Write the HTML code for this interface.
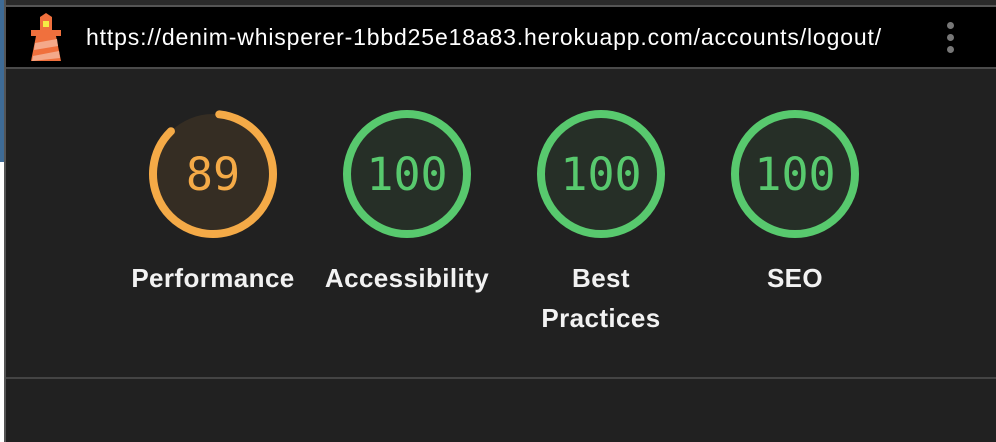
<!DOCTYPE html>
<html><head><style>
*{margin:0;padding:0;box-sizing:border-box}
body{width:996px;height:442px;background:#212121;position:relative;overflow:hidden;font-family:"Liberation Sans",sans-serif}
.top{position:absolute;left:0;top:0;width:996px;height:5px;background:#2a2a2a}
.l1{position:absolute;left:0;top:5px;width:996px;height:2px;background:#555}
.hdr{position:absolute;left:6px;top:7px;width:990px;height:60px;background:#000}
.l2{position:absolute;left:0;top:67px;width:996px;height:2px;background:#4a4a4a}
.blue{position:absolute;left:0;top:0;width:4px;height:162px;background:#3e6b96}
.white{position:absolute;left:0;top:162px;width:4px;height:280px;background:#fff}
.vl{position:absolute;left:4px;top:0;width:2px;height:442px;background:#555}
.url{position:absolute;left:86px;top:24px;color:#fff;font-size:23px;line-height:26px;letter-spacing:0.85px;white-space:nowrap}
.dots{position:absolute;left:947px;top:22px}
.dots i{display:block;width:7px;height:7px;border-radius:50%;background:#777;margin-bottom:5px}
.l3{position:absolute;left:6px;top:377px;width:990px;height:2px;background:#444}
.g{position:absolute;top:106px;width:140px;text-align:center}
.g svg{display:block;margin:0 auto}
.lab{color:#f2f2f2;font-size:26px;font-weight:bold;line-height:40px;margin-top:16px;letter-spacing:0.4px;margin-left:-40px;margin-right:-40px}
</style></head><body>
<div class="top"></div><div class="l1"></div>
<div class="hdr"></div><div class="l2"></div>
<div class="blue"></div><div class="white"></div><div class="vl"></div>
<svg style="position:absolute;left:30px;top:13px" width="32" height="48" viewBox="0 0 32 48">
<polygon points="16,0 22,4 22,17 10,17 10,4" fill="#f0703d"/>
<rect x="13" y="8" width="6" height="6" fill="#f5ec45"/>
<rect x="1" y="17" width="30" height="6" fill="#f0703d"/>
<polygon points="6,23 26,23 31,48 1,48" fill="#f0703d"/>
<polygon points="5,30 27,26 28,33 4,37" fill="#f4a98a"/>
<polygon points="3,43 29,38 30,45 2,48" fill="#f4a98a"/>
</svg>
<div class="url">https://denim-whisperer-1bbd25e18a83.herokuapp.com/accounts/logout/</div>
<div class="dots"><i></i><i></i><i></i></div>
<div class="l3"></div>

<div class="g" style="left:143px">
<svg width="136" height="136" viewBox="0 0 136 136"><circle cx="68" cy="68" r="60" fill="#352d23"/>
<circle cx="68" cy="68" r="60" fill="none" stroke="#f4aa47" stroke-width="8" stroke-linecap="round" stroke-dasharray="324 377" transform="rotate(-84 68 68)"/>
<text x="68" y="84" text-anchor="middle" font-family="DejaVu Sans Mono,monospace" font-size="45" fill="#f4aa47">89</text></svg>
<div class="lab">Performance</div></div>

<div class="g" style="left:337px">
<svg width="136" height="136" viewBox="0 0 136 136"><circle cx="68" cy="68" r="60" fill="#262f27" stroke="#58c96e" stroke-width="8"/>
<text x="68" y="84" text-anchor="middle" font-family="DejaVu Sans Mono,monospace" font-size="45" fill="#58c96e">100</text></svg>
<div class="lab">Accessibility</div></div>

<div class="g" style="left:531px">
<svg width="136" height="136" viewBox="0 0 136 136"><circle cx="68" cy="68" r="60" fill="#262f27" stroke="#58c96e" stroke-width="8"/>
<text x="68" y="84" text-anchor="middle" font-family="DejaVu Sans Mono,monospace" font-size="45" fill="#58c96e">100</text></svg>
<div class="lab">Best<br>Practices</div></div>

<div class="g" style="left:725px">
<svg width="136" height="136" viewBox="0 0 136 136"><circle cx="68" cy="68" r="60" fill="#262f27" stroke="#58c96e" stroke-width="8"/>
<text x="68" y="84" text-anchor="middle" font-family="DejaVu Sans Mono,monospace" font-size="45" fill="#58c96e">100</text></svg>
<div class="lab">SEO</div></div>
</body></html>
